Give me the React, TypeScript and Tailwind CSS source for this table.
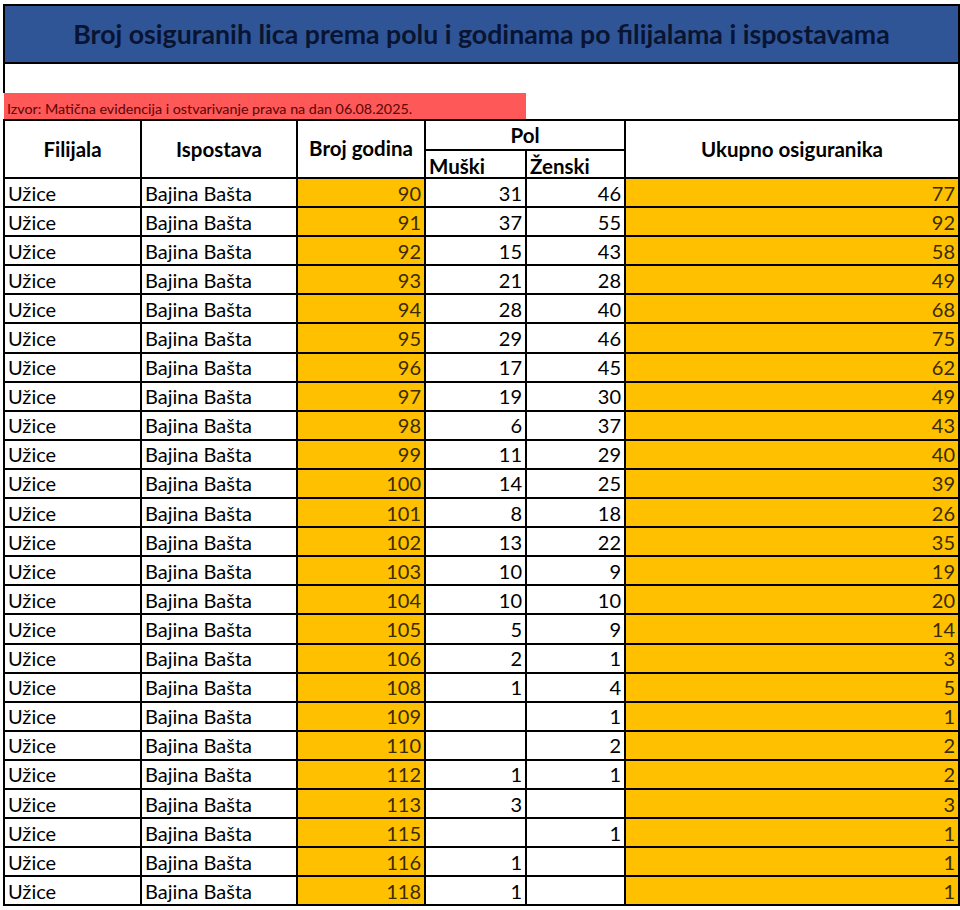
const ROWS: [number, number | null, number | null, number][] = [
  [90, 31, 46, 77],
  [91, 37, 55, 92],
  [92, 15, 43, 58],
  [93, 21, 28, 49],
  [94, 28, 40, 68],
  [95, 29, 46, 75],
  [96, 17, 45, 62],
  [97, 19, 30, 49],
  [98, 6, 37, 43],
  [99, 11, 29, 40],
  [100, 14, 25, 39],
  [101, 8, 18, 26],
  [102, 13, 22, 35],
  [103, 10, 9, 19],
  [104, 10, 10, 20],
  [105, 5, 9, 14],
  [106, 2, 1, 3],
  [108, 1, 4, 5],
  [109, null, 1, 1],
  [110, null, 2, 2],
  [112, 1, 1, 2],
  [113, 3, null, 3],
  [115, null, 1, 1],
  [116, 1, null, 1],
  [118, 1, null, 1],
];

const cell = "border-2 border-black h-[29.1px] px-[3px] py-0 leading-none";

export default function App() {
  return (
    <div className="bg-white w-[960px] h-[910px] pt-[4px] pl-[3px] font-['Lato',sans-serif] text-[20px] text-black">
      <table className="table-fixed border-collapse w-[955px]">
        <colgroup>
          <col className="w-[137px]" />
          <col className="w-[156px]" />
          <col className="w-[128px]" />
          <col className="w-[101px]" />
          <col className="w-[99px]" />
          <col className="w-[334px]" />
        </colgroup>
        <tbody>
          <tr>
            <td
              colSpan={6}
              className="border-2 border-black bg-[#2f5597] h-[58px] text-center font-bold text-[26.7px] text-[#091432]"
            >
              Broj osiguranih lica prema polu i godinama po filijalama i ispostavama
            </td>
          </tr>
          <tr>
            <td colSpan={6} className="border-x-2 border-black h-[30px]"></td>
          </tr>
          <tr>
            <td
              colSpan={4}
              className="bg-[#fe5858] h-[27px] px-[3px] align-bottom pb-[3px] text-[14.3px] leading-none text-[#5a0606]"
            >
              Izvor: Matična evidencija i ostvarivanje prava na dan 06.08.2025.
            </td>
            <td colSpan={2} className="border-r-2 border-black"></td>
          </tr>
          <tr>
            <th rowSpan={2} className="border-2 border-black font-bold text-center text-[20.5px]">
              Filijala
            </th>
            <th rowSpan={2} className="border-2 border-black font-bold text-center text-[20.5px]">
              Ispostava
            </th>
            <th rowSpan={2} className="border-2 border-black font-bold text-center text-[20.5px] pb-[2px]">
              Broj godina
            </th>
            <th colSpan={2} className="border-2 border-black font-bold text-center text-[20.5px] h-[30px] leading-none">
              Pol
            </th>
            <th rowSpan={2} className="border-2 border-black font-bold text-center text-[20.5px]">
              Ukupno osiguranika
            </th>
          </tr>
          <tr>
            <th className="border-2 border-black font-bold text-left text-[20.5px] px-[3px] h-[28px] leading-none pt-[4px]">
              Muški
            </th>
            <th className="border-2 border-black font-bold text-left text-[20.5px] px-[3px] h-[28px] leading-none pt-[4px]">
              Ženski
            </th>
          </tr>
          {ROWS.map(([age, m, z, total]) => (
            <tr key={age}>
              <td className={`${cell} text-left`}>Užice</td>
              <td className={`${cell} text-left`}>Bajina Bašta</td>
              <td className={`${cell} text-right bg-[#ffc000] text-[#3a2c00]`}>{age}</td>
              <td className={`${cell} text-right`}>{m ?? ""}</td>
              <td className={`${cell} text-right`}>{z ?? ""}</td>
              <td className={`${cell} text-right bg-[#ffc000] text-[#3a2c00]`}>{total}</td>
            </tr>
          ))}
        </tbody>
      </table>
    </div>
  );
}
